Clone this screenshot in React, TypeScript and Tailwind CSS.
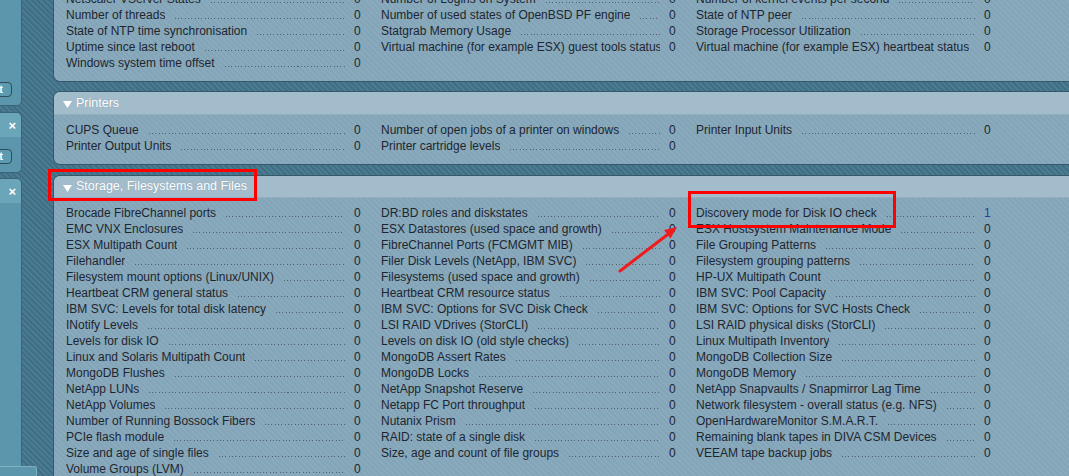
type Item = { label: string; value?: string };

const topCols: Item[][] = [
  [
    { label: "Netscaler VServer States" },
    { label: "Number of threads" },
    { label: "State of NTP time synchronisation" },
    { label: "Uptime since last reboot" },
    { label: "Windows system time offset" },
  ],
  [
    { label: "Number of Logins on System" },
    { label: "Number of used states of OpenBSD PF engine" },
    { label: "Statgrab Memory Usage" },
    { label: "Virtual machine (for example ESX) guest tools status" },
  ],
  [
    { label: "Number of kernel events per second" },
    { label: "State of NTP peer" },
    { label: "Storage Processor Utilization" },
    { label: "Virtual machine (for example ESX) heartbeat status" },
  ],
];

const printerCols: Item[][] = [
  [{ label: "CUPS Queue" }, { label: "Printer Output Units" }],
  [
    { label: "Number of open jobs of a printer on windows" },
    { label: "Printer cartridge levels" },
  ],
  [{ label: "Printer Input Units" }],
];

const storageCols: Item[][] = [
  [
    "Brocade FibreChannel ports",
    "EMC VNX Enclosures",
    "ESX Multipath Count",
    "Filehandler",
    "Filesystem mount options (Linux/UNIX)",
    "Heartbeat CRM general status",
    "IBM SVC: Levels for total disk latency",
    "INotify Levels",
    "Levels for disk IO",
    "Linux and Solaris Multipath Count",
    "MongoDB Flushes",
    "NetApp LUNs",
    "NetApp Volumes",
    "Number of Running Bossock Fibers",
    "PCIe flash module",
    "Size and age of single files",
    "Volume Groups (LVM)",
  ].map((label) => ({ label })),
  [
    "DR:BD roles and diskstates",
    "ESX Datastores (used space and growth)",
    "FibreChannel Ports (FCMGMT MIB)",
    "Filer Disk Levels (NetApp, IBM SVC)",
    "Filesystems (used space and growth)",
    "Heartbeat CRM resource status",
    "IBM SVC: Options for SVC Disk Check",
    "LSI RAID VDrives (StorCLI)",
    "Levels on disk IO (old style checks)",
    "MongoDB Assert Rates",
    "MongoDB Locks",
    "NetApp Snapshot Reserve",
    "Netapp FC Port throughput",
    "Nutanix Prism",
    "RAID: state of a single disk",
    "Size, age and count of file groups",
  ].map((label) => ({ label })),
  [
    { label: "Discovery mode for Disk IO check", value: "1" },
    ...[
      "ESX Hostsystem Maintenance Mode",
      "File Grouping Patterns",
      "Filesystem grouping patterns",
      "HP-UX Multipath Count",
      "IBM SVC: Pool Capacity",
      "IBM SVC: Options for SVC Hosts Check",
      "LSI RAID physical disks (StorCLI)",
      "Linux Multipath Inventory",
      "MongoDB Collection Size",
      "MongoDB Memory",
      "NetApp Snapvaults / Snapmirror Lag Time",
      "Network filesystem - overall status (e.g. NFS)",
      "OpenHardwareMonitor S.M.A.R.T.",
      "Remaining blank tapes in DIVA CSM Devices",
      "VEEAM tape backup jobs",
    ].map((label) => ({ label })),
  ],
];

function Row({ label, value }: Item) {
  return (
    <div className="flex h-4 leading-4 text-[12px]">
      <div className="flex-1 min-w-0 flex overflow-hidden whitespace-nowrap">
        <span className="min-w-0 overflow-hidden text-[#1e2530]">{label}</span>
        {/* dotted leader, first 8px masked as the gap */}
        <span className="flex-1 min-w-0 h-[1px] self-end mb-[4px] bg-[repeating-linear-gradient(to_right,#52616e_0px,#52616e_1px,transparent_1px,transparent_3.3px)] [mask-image:linear-gradient(to_right,transparent_8px,black_8px)]" />
      </div>
      <div className={`w-[36px] pl-[9px] ${value ? "text-[#2340a0]" : "text-[#1e2530]"}`}>
        {value ?? "0"}
      </div>
    </div>
  );
}

function Columns({ cols }: { cols: Item[][] }) {
  return (
    <div className="grid grid-cols-[315px_315px_315px] pl-[12px]">
      {cols.map((col, i) => (
        <div key={i} className="flex flex-col">
          {col.map((item) => (
            <Row key={item.label} {...item} />
          ))}
        </div>
      ))}
    </div>
  );
}

function PanelHeader({ title, h }: { title: string; h: string }) {
  return (
    <div className={`${h} flex items-center pl-[9px] bg-[#a3bccb] rounded-tl-[6px] border-b border-[#93afbf]`}>
      <svg width="9" height="7" viewBox="0 0 9 7" className="mt-[3px]">
        <polygon points="0,0 9,0 4.5,7" fill="#ffffff" />
      </svg>
      <span className="ml-[4px] text-[12.5px] text-white [text-shadow:0_0_1px_#7f9aaa]">{title}</span>
    </div>
  );
}

const panelBg =
  "bg-[repeating-linear-gradient(45deg,#89aabc_0px,#89aabc_2px,#84a5b7_2px,#84a5b7_4px)] shadow-[0_0_0_1px_#34596b] rounded-l-[6px]";

function SideCard({ children, className }: { children: React.ReactNode; className: string }) {
  return (
    <div className={`bg-[#5b96ac] border border-[#3a6578] rounded-r-[5px] flex flex-col ${className}`}>
      {children}
    </div>
  );
}

function EditButton() {
  return (
    <div className="flex justify-end pr-[9px]">
      <div className="h-[15px] px-2 rounded-[4px] border border-[#2d4d5d] bg-[#5d9ab0] text-white text-[11px] leading-[13px] font-bold">
        Edit
      </div>
    </div>
  );
}

function CardHead() {
  return (
    <div className="h-[24px] bg-[#6aa5ba] rounded-tr-[5px] flex items-center justify-end pr-[5px]">
      <span className="text-white text-[13px] font-bold leading-none">×</span>
    </div>
  );
}

export default function App() {
  return (
    <div className="relative w-[1069px] h-[476px] overflow-hidden flex font-['Liberation_Sans',Arial,sans-serif] bg-[repeating-linear-gradient(45deg,#4a7b91_0px,#4a7b91_2px,#406e84_2px,#406e84_4px)]">
      {/* sidebar (scrolled, only right edge visible) */}
      <div className="w-[22px] shrink-0 overflow-hidden">
        <div className="w-[160px] ml-[-138px] flex flex-col">
          <SideCard className="h-[120px] mt-[-14px] justify-end pb-[8px]">
            <EditButton />
          </SideCard>
          <SideCard className="h-[61px] mt-[6px]">
            <CardHead />
            <div className="flex-1 flex flex-col justify-end pb-[8px]">
              <EditButton />
            </div>
          </SideCard>
          <SideCard className="h-[300px] mt-[5px] border-b-0 rounded-br-none">
            <CardHead />
          </SideCard>
        </div>
      </div>
      <div className="absolute left-0 top-[466px] w-[37px] h-[20px] bg-[#5b96ac] border-t border-r border-[#7fb1c3] rounded-tr-[3px]" />

      {/* main panels */}
      <div className="ml-[32px] w-[1040px] shrink-0 flex flex-col">
        <div className={`${panelBg} mt-[-9px] pb-[10px]`}>
          <Columns cols={topCols} />
        </div>

        <div className={`${panelBg} mt-[11px] pb-[10px]`}>
          <PanelHeader title="Printers" h="h-[23px]" />
          <div className="pt-[7px]">
            <Columns cols={printerCols} />
          </div>
        </div>

        <div className={`${panelBg} mt-[12px] pb-[10px]`}>
          <PanelHeader title="Storage, Filesystems and Files" h="h-[22px]" />
          <div className="pt-[7px]">
            <Columns cols={storageCols} />
          </div>
        </div>
      </div>

      {/* annotations */}
      <div className="absolute left-[48px] top-[169px] w-[209px] h-[32px] border-[3px] border-[#f00]" />
      <div className="absolute left-[688px] top-[191px] w-[208px] h-[37px] border-[3px] border-[#f00]" />
      <svg className="absolute left-0 top-0 pointer-events-none" width="1069" height="476">
        <line x1="620" y1="271" x2="667" y2="235" stroke="#f21b1b" strokeWidth="3" strokeLinecap="round" />
        <polygon points="677,227 670.5,238.5 664,230" fill="#f21b1b" />
      </svg>
    </div>
  );
}
